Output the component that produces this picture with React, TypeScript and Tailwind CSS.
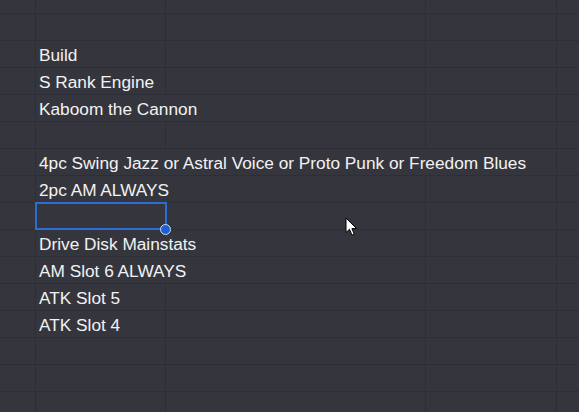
const COLS = [36, 130, 260, 131];

type Row = { text?: string; span?: number; selected?: boolean; h?: number };

const rows: Row[] = [
  { h: 14 },
  {},
  { text: "Build", span: 1 },
  { text: "S Rank Engine", span: 1 },
  { text: "Kaboom the Cannon", span: 2 },
  {},
  { text: "4pc Swing Jazz or Astral Voice or Proto Punk or Freedom Blues", span: 3 },
  { text: "2pc AM ALWAYS", span: 2 },
  { selected: true },
  { text: "Drive Disk Mainstats", span: 2 },
  { text: "AM Slot 6 ALWAYS", span: 2 },
  { text: "ATK Slot 5", span: 1 },
  { text: "ATK Slot 4", span: 1 },
  {},
  {},
  {},
];

function Cursor() {
  return (
    <svg
      className="absolute left-[345px] top-[217px]"
      width="14"
      height="20"
      viewBox="0 0 14 20"
    >
      <path
        d="M1 1 L1 15.5 L4.5 12.3 L7 18.2 L9.3 17.2 L6.9 11.6 L11.6 11.6 Z"
        fill="#ffffff"
        stroke="#000000"
        strokeWidth="1"
        strokeLinejoin="round"
      />
    </svg>
  );
}

function SheetRow({ row }: { row: Row }) {
  const span = row.span ?? 1;
  const spanWidth = COLS.slice(1, 1 + span).reduce((a, b) => a + b, 0);
  const rest = COLS.slice(1 + span);

  return (
    <div
      className="flex shrink-0 border-b border-[#2e2f36]"
      style={{ height: row.h ?? 27 }}
    >
      <div className="shrink-0 border-r border-[#2e2f36]" style={{ width: COLS[0] }} />
      <div
        className="relative shrink-0 border-r border-[#2e2f36] pl-[3px] whitespace-nowrap leading-[28px]"
        style={{ width: row.text ? spanWidth : COLS[1] }}
      >
        {row.text}
        {row.selected && (
          <>
            <div className="absolute -left-px -top-px h-[28px] w-[132px] border-2 border-[#2b6dd4]" />
            <div className="absolute left-[124px] top-[21px] h-[11px] w-[11px] rounded-full border border-[#cfdcf0] bg-[#1c5fd6]" />
          </>
        )}
      </div>
      {(row.text ? rest : COLS.slice(2)).map((w, i) => (
        <div key={i} className="shrink-0 border-r border-[#2e2f36]" style={{ width: w }} />
      ))}
      <div className="flex-1" />
    </div>
  );
}

export default function App() {
  return (
    <div className="relative h-[412px] w-[579px] overflow-hidden bg-[#35363d] font-['Liberation_Sans',Arial,sans-serif] text-[17.25px] text-[#f2f2f2]">
      <div className="flex flex-col">
        {rows.map((r, i) => (
          <SheetRow key={i} row={r} />
        ))}
      </div>
      <Cursor />
    </div>
  );
}
